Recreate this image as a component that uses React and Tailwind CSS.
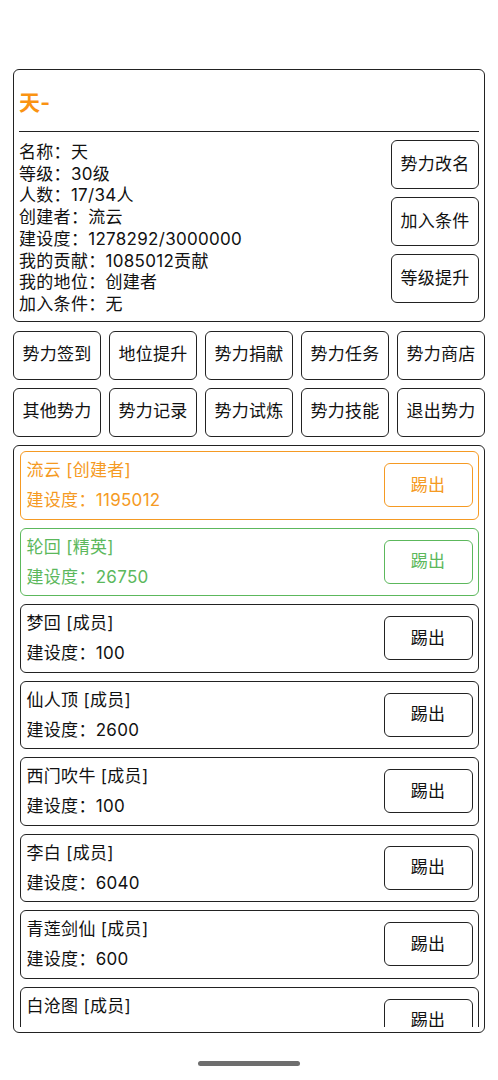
import React from "react";

const members = [
  { name: "流云 [创建者]", value: "1195012", tone: "orange" },
  { name: "轮回 [精英]", value: "26750", tone: "green" },
  { name: "梦回 [成员]", value: "100", tone: "black" },
  { name: "仙人顶 [成员]", value: "2600", tone: "black" },
  { name: "西门吹牛 [成员]", value: "100", tone: "black" },
  { name: "李白 [成员]", value: "6040", tone: "black" },
  { name: "青莲剑仙 [成员]", value: "600", tone: "black" },
  { name: "白沧图 [成员]", value: "3200", tone: "black" },
];

const toneCls = {
  orange: "border-[#f59a23] text-[#f59a23]",
  green: "border-[#5cb85c] text-[#5cb85c]",
  black: "border-[#222] text-[#111]",
};

const info = [
  "名称：天",
  "等级：30级",
  "人数：17/34人",
  "创建者：流云",
  "建设度：1278292/3000000",
  "我的贡献：1085012贡献",
  "我的地位：创建者",
  "加入条件：无",
];

const grid = [
  "势力签到", "地位提升", "势力捐献", "势力任务", "势力商店",
  "其他势力", "势力记录", "势力试炼", "势力技能", "退出势力",
];

function Btn({ children, cls = "" }) {
  return (
    <div className={"flex items-center justify-center rounded-[6px] border-[1.5px] border-[#222] bg-white text-[17px] text-[#111] " + cls}>
      {children}
    </div>
  );
}

export default function App() {
  return (
    <div className="relative h-[1080px] w-[498px] overflow-hidden bg-white font-['Inter','Noto_Sans_CJK_SC',sans-serif] tracking-[0.3px] text-[#111]">
      <div className="flex flex-col gap-[8px] px-[13px] pt-[69px]">
        {/* top card */}
        <div className="rounded-[6px] border-[1.5px] border-[#222] px-[5px] pb-[5px]">
          <div className="h-[62px] border-b-[1.5px] border-[#222] pt-[19px] text-[21px] font-bold leading-[28px] text-[#fa9312]">
            天-
          </div>
          <div className="mt-[8px] flex items-start justify-between">
            <div className="mt-[2px] text-[17px] leading-[21.7px]">
              {info.map((t) => (
                <div key={t}>{t}</div>
              ))}
            </div>
            <div className="flex flex-col gap-[8px]">
              <Btn cls="h-[49px] w-[88px]">势力改名</Btn>
              <Btn cls="h-[49px] w-[88px]">加入条件</Btn>
              <Btn cls="h-[49px] w-[88px]">等级提升</Btn>
            </div>
          </div>
        </div>

        {/* grid */}
        <div className="mt-[1px] grid grid-cols-5 gap-[8px]">
          {grid.map((t) => (
            <Btn key={t} cls="h-[49px]">{t}</Btn>
          ))}
        </div>

        {/* list */}
        <div className="h-[588px] rounded-[6px] border-[1.5px] border-[#222] px-[5.5px] pt-[5.5px]">
          <div className="flex h-[576px] flex-col gap-[8px] overflow-hidden">
            {members.map((m) => (
              <div
                key={m.name}
                className={"flex h-[68.5px] shrink-0 items-center justify-between rounded-[6px] border-[1.5px] pl-[6px] pr-[5px] " + toneCls[m.tone]}
              >
                <div className="text-[17px] leading-[30px]">
                  <div>{m.name}</div>
                  <div>建设度：{m.value}</div>
                </div>
                <div className={"flex h-[44px] w-[89px] items-center justify-center rounded-[6px] border-[1.5px] text-[17px] " + toneCls[m.tone]}>
                  踢出
                </div>
              </div>
            ))}
          </div>
        </div>
      </div>
      <div className="absolute bottom-[14px] left-[198px] h-[5px] w-[102px] rounded-full bg-[#6e6e6e]" />
    </div>
  );
}
